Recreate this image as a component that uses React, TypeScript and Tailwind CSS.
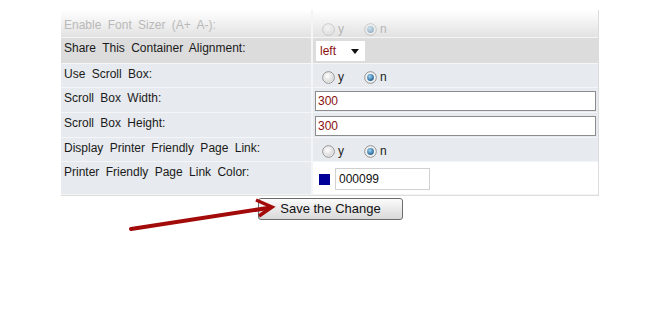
import React from "react";

function Radio({ checked, faded }: { checked?: boolean; faded?: boolean }) {
  return (
    <svg width="13" height="13" viewBox="0 0 13 13" className={faded ? "opacity-40" : ""}>
      <defs>
        <radialGradient id={checked ? "rc" : "ru"} cx="0.4" cy="0.35" r="0.7">
          <stop offset="0" stopColor={checked ? "#9fd3f5" : "#ffffff"} />
          <stop offset="1" stopColor={checked ? "#1a5a8c" : "#d6d6d6"} />
        </radialGradient>
      </defs>
      <circle cx="6.5" cy="6.5" r="5.8" fill="#f4f4f4" stroke="#8f8f8f" strokeWidth="1" />
      <circle cx="6.5" cy="6.5" r={checked ? 3.4 : 4.6} fill={checked ? "url(#rc)" : "url(#ru)"} />
    </svg>
  );
}

function RadioPair({ faded }: { faded?: boolean }) {
  return (
    <div className={`flex items-center pl-[7px] ${faded ? "text-[#b5b5b5]" : "text-[#222]"}`}>
      <Radio faded={faded} />
      <span className="ml-[3px] w-[26px]">y</span>
      <Radio checked faded={faded} />
      <span className="ml-[3px]">n</span>
    </div>
  );
}

function Row({
  label,
  h,
  bg,
  children,
  rightBg,
  faded,
}: {
  label: string;
  h: string;
  bg: string;
  children: React.ReactNode;
  rightBg?: string;
  faded?: boolean;
}) {
  return (
    <div className={`flex border-b border-[#f4f5f7] ${h}`}>
      <div
        className={`w-[252px] shrink-0 pl-[3px] leading-[18px] border-r-2 border-[#f4f5f7] ${bg} ${
          faded ? "text-[#b9b9b9] pt-[6px]" : "text-[#1a1a1a] pt-[1px]"
        }`}
        style={{ wordSpacing: "3px" }}
      >
        {label}
      </div>
      <div className={`flex-1 flex items-start pt-[2px] pl-[2px] pr-[2px] ${rightBg ?? bg}`}>{children}</div>
    </div>
  );
}

export default function App() {
  return (
    <div
      className="relative w-[661px] h-[322px] bg-white text-[12px] leading-[20px]"
      style={{ fontFamily: '"Liberation Sans", Arial, sans-serif' }}
    >
      <div className="pt-[10px] pl-[61px]">
        <div className="w-[538px] border-r border-b border-[#dcdcdc]">
          <Row
            label="Enable Font Sizer (A+ A-):"
            h="h-[28px]"
            bg="bg-gradient-to-b from-white to-[#e2e2e2]"
            faded
          >
            <div className="pt-[7px]">
              <RadioPair faded />
            </div>
          </Row>
          <Row label="Share This Container Alignment:" h="h-[26px]" bg="bg-[#dcdcdc]">
            <div className="ml-[1px] mt-[1px] w-[49px] h-[20px] bg-white flex items-center pl-[4px] text-[#8a1010]">
              <span className="flex-1">left</span>
              <svg width="8" height="5" viewBox="0 0 8 5" className="mr-[6px]">
                <path d="M0 0 L8 0 L4 5 Z" fill="#111" />
              </svg>
            </div>
          </Row>
          <Row label="Use Scroll Box:" h="h-[24px]" bg="bg-[#e7eaee]">
            <div className="pt-[1px]">
              <RadioPair />
            </div>
          </Row>
          <Row label="Scroll Box Width:" h="h-[25px]" bg="bg-[#e7eaee]">
            <div className="mt-[1px] w-full h-[20px] bg-white border border-[#8c8c8c] pl-[2px] leading-[18px] text-[#8a1010]">
              300
            </div>
          </Row>
          <Row label="Scroll Box Height:" h="h-[25px]" bg="bg-[#e7eaee]">
            <div className="mt-[1px] w-full h-[20px] bg-white border border-[#8c8c8c] pl-[2px] leading-[18px] text-[#8a1010]">
              300
            </div>
          </Row>
          <Row label="Display Printer Friendly Page Link:" h="h-[24px]" bg="bg-[#e7eaee]">
            <div className="pt-[1px]">
              <RadioPair />
            </div>
          </Row>
          <Row
            label="Printer Friendly Page Link Color:"
            h="h-[33px]"
            bg="bg-[#e7eaee]"
            rightBg="bg-white"
          >
            <div className="flex items-center pl-[4px] pt-[4px]">
              <div className="w-[11px] h-[11px] bg-[#000099]" />
              <div className="ml-[5px] w-[95px] h-[22px] border border-[#d0d0d0] bg-white pl-[3px] leading-[20px] text-[#111]">
                000099
              </div>
            </div>
          </Row>
        </div>
        <div className="pl-[197px] pt-[2px]">
          <button
            className="w-[145px] h-[22px] rounded-[3px] border border-[#6b6b6b] bg-gradient-to-b from-[#fbfbfb] to-[#d9d9d9] text-[#111] text-[13px] leading-[20px]"
            style={{ fontFamily: '"Liberation Sans", Arial, sans-serif' }}
          >
            Save the Change
          </button>
        </div>
      </div>
      <svg className="absolute left-0 top-0 pointer-events-none" width="661" height="322">
        <line x1="131" y1="229" x2="268" y2="208" stroke="#a30a0a" strokeWidth="4" strokeLinecap="round" />
        <path d="M256 200 L272 207 L259 216" fill="none" stroke="#a30a0a" strokeWidth="3.5" strokeLinejoin="miter" />
      </svg>
    </div>
  );
}
